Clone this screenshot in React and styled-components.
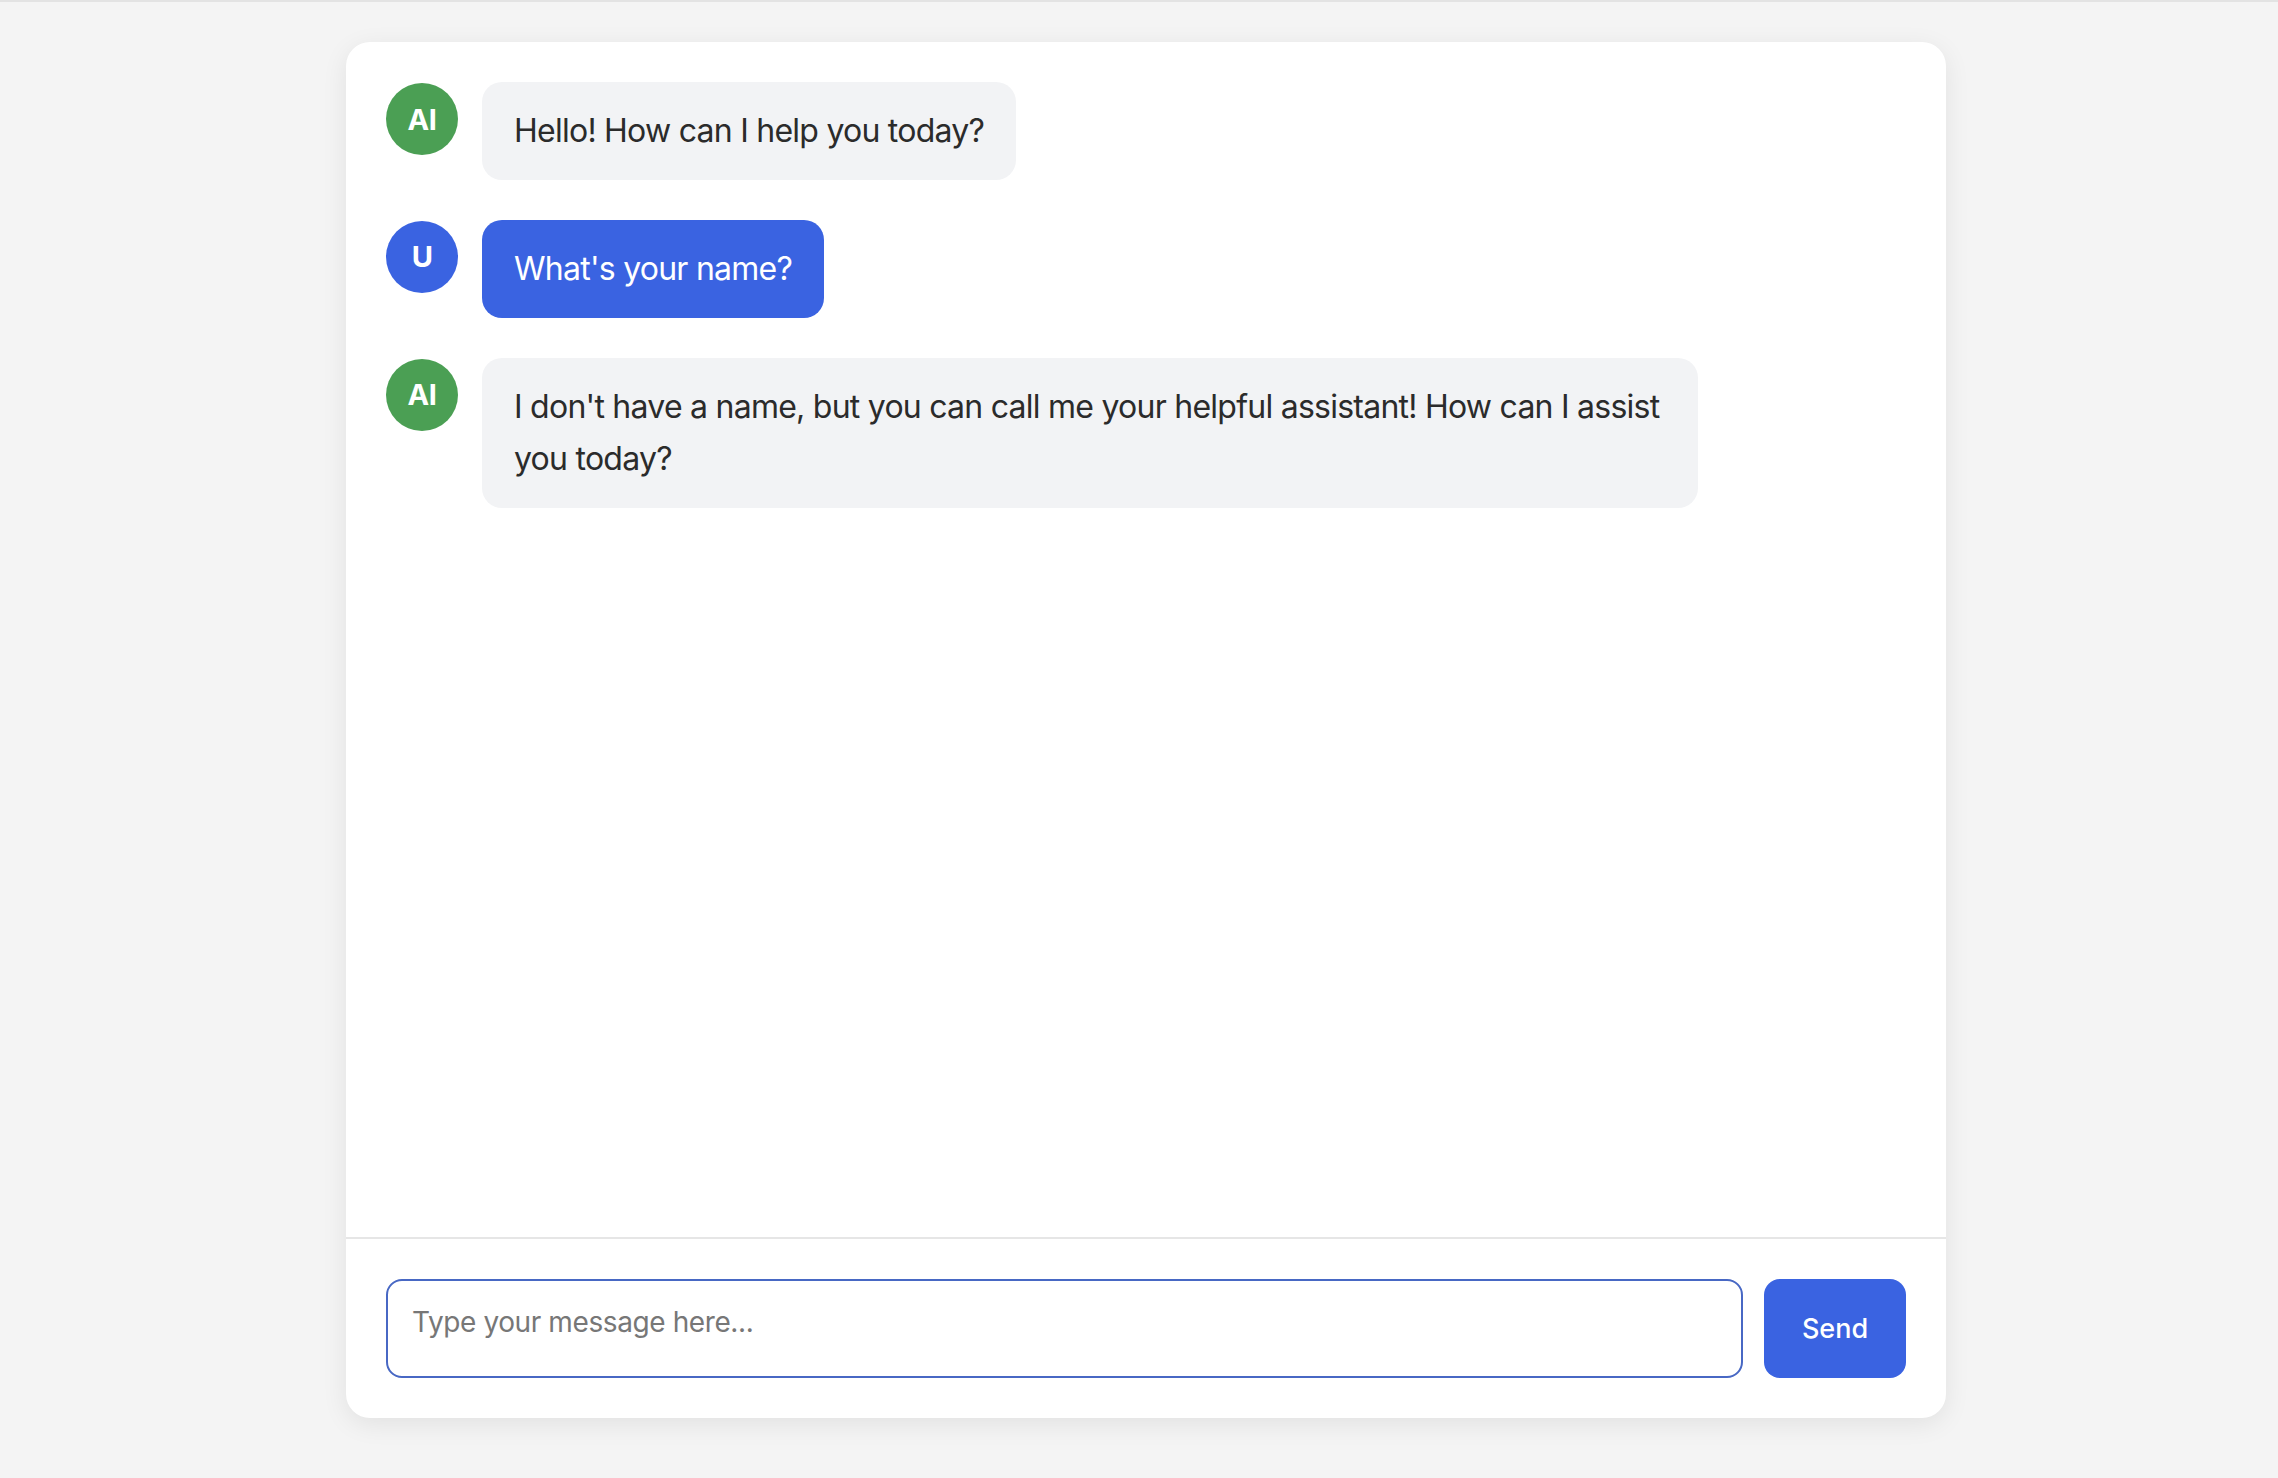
import React, { useState } from 'react';
import styled, { createGlobalStyle } from 'styled-components';

const GlobalStyle = createGlobalStyle`
    * {
        box-sizing: border-box;
    }
    html, body {
        margin: 0;
        padding: 0;
        background-color: #f4f4f4;
    }
    body {
        border-top: 2px solid #e3e3e3;
        font-family: Inter, "Liberation Sans", sans-serif;
        color: #2b2b2b;
    }
`

const Page = styled.div`
    display: flex;
    justify-content: center;
    padding: 40px 0 0 14px;
    min-height: 1476px;
`
const Card = styled.div`
    display: flex;
    flex-flow: column nowrap;
    width: 1600px;
    height: 1376px;
    background-color: #ffffff;
    border-radius: 24px;
    box-shadow: 0 6px 26px rgba(0, 0, 0, 0.08);
    overflow: hidden;
`
const Messages = styled.div`
    display: flex;
    flex-flow: column nowrap;
    gap: 40px;
    flex: 1;
    padding: 40px;
    overflow-y: auto;
`
const Row = styled.div`
    display: flex;
    align-items: flex-start;
    gap: 24px;
`
const Avatar = styled.div`
    display: flex;
    justify-content: center;
    align-items: center;
    flex: 0 0 72px;
    width: 72px;
    height: 72px;
    margin-top: 1px;
    border-radius: 50%;
    background-color: ${props => props.user ? '#3a63e1' : '#4b9f54'};
    color: #ffffff;
    font-size: 29px;
    font-weight: 700;
    letter-spacing: -0.5px;
    user-select: none;
`
const Bubble = styled.div`
    max-width: 80%;
    padding: 23px 32px 22px;
    border-radius: 20px;
    background-color: ${props => props.user ? '#3a63e1' : '#f2f3f5'};
    color: ${props => props.user ? '#ffffff' : '#2b2b2b'};
    font-size: 32px;
    line-height: 1.65;
    letter-spacing: -0.75px;
`
const Composer = styled.form`
    display: flex;
    align-items: stretch;
    gap: 21px;
    padding: 40px;
    border-top: 2px solid #e6e6e6;
`
const Input = styled.textarea`
    flex: 1;
    height: 99px;
    padding: 20px 24px;
    border: 2px solid #4868c4;
    border-radius: 16px;
    outline: none;
    resize: none;
    font-family: inherit;
    font-size: 28px;
    line-height: 1.5;
    letter-spacing: -0.4px;
    color: #2b2b2b;
    caret-color: #111111;

    &::placeholder {
        color: #777777;
    }
`
const Button = styled.button`
    width: 142px;
    height: 99px;
    border: none;
    border-radius: 16px;
    background-color: #3a63e1;
    color: #ffffff;
    font-family: inherit;
    font-size: 27px;
    font-weight: 500;
    cursor: pointer;
`

const messages = [
    { from: 'ai', text: 'Hello! How can I help you today?' },
    { from: 'user', text: "What's your name?" },
    { from: 'ai', text: "I don't have a name, but you can call me your helpful assistant! How can I assist you today?" },
]

export default function App() {
    const [value, setValue] = useState('')
    return (
        <Page>
            <GlobalStyle />
            <Card>
                <Messages>
                    {messages.map((item, key) =>
                        <Row key={key}>
                            <Avatar user={item.from === 'user'}>{item.from === 'user' ? 'U' : 'AI'}</Avatar>
                            <Bubble user={item.from === 'user'}>{item.text}</Bubble>
                        </Row>
                    )}
                </Messages>
                <Composer onSubmit={e => e.preventDefault()}>
                    <Input
                        value={value}
                        onChange={e => setValue(e.target.value)}
                        placeholder="Type your message here..."
                        rows={1}
                        autoFocus
                    />
                    <Button type="submit">Send</Button>
                </Composer>
            </Card>
        </Page>
    )
}
